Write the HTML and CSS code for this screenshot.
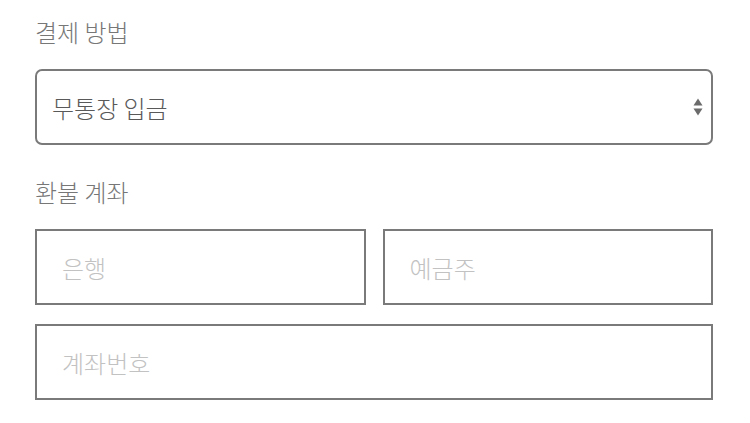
FILE: index.html
```html
<html>
<head>
<meta charset="utf-8">
<link rel="stylesheet" href="styles.css">
<title>결제 방법</title>
</head>
<body>
<div id="main">
  <div class="field-label first">결제 방법</div>
  <div class="select-box">
    <span class="select-value">무통장 입금</span>
    <svg class="select-arrows" width="10" height="22" viewBox="0 0 10 22">
      <polygon points="5,2.5 9.5,9.5 0.5,9.5" fill="#6b6b6b"/>
      <polygon points="0.5,12.5 9.5,12.5 5,19.5" fill="#6b6b6b"/>
    </svg>
  </div>

  <div class="field-label second">환불 계좌</div>
  <div class="input-row">
    <input class="text-input" type="text" placeholder="은행">
    <input class="text-input" type="text" placeholder="예금주">
  </div>
  <input class="text-input wide" type="text" placeholder="계좌번호">
</div>
</body>
</html>
```
FILE: styles.css
```css
body {
    margin: 0;
    background-color: #fff;
    font-family: "Noto Sans CJK KR", "Noto Sans", sans-serif;
    font-weight: 300;
}

#main {
    width: 678px;
    padding: 17px 0 0 35px;
}

.field-label {
    font-size: 24px;
    line-height: 30px;
    color: #777;
    margin-bottom: 22px;
}

.field-label.second {
    margin-top: 32px;
}

.select-box {
    box-sizing: border-box;
    height: 76px;
    border: 2px solid #7a7a7a;
    border-radius: 7px;
    padding: 0 8px 0 15px;
    display: flex;
    align-items: center;
    justify-content: space-between;
}

.select-value {
    font-size: 24px;
    color: #595959;
}

.select-arrows {
    display: block;
}

.input-row {
    display: grid;
    grid-template-columns: 1fr 1fr;
    column-gap: 17px;
    margin-bottom: 19px;
}

.text-input {
    box-sizing: border-box;
    display: block;
    width: 100%;
    height: 76px;
    margin: 0;
    border: 2px solid #7a7a7a;
    border-radius: 0;
    padding: 0 25px;
    font-family: "Noto Sans CJK KR", "Noto Sans", sans-serif;
    font-weight: 300;
    font-size: 24px;
    color: #555;
    background: #fff;
    outline: none;
}

.text-input::placeholder {
    color: #c2c2c2;
}
```
